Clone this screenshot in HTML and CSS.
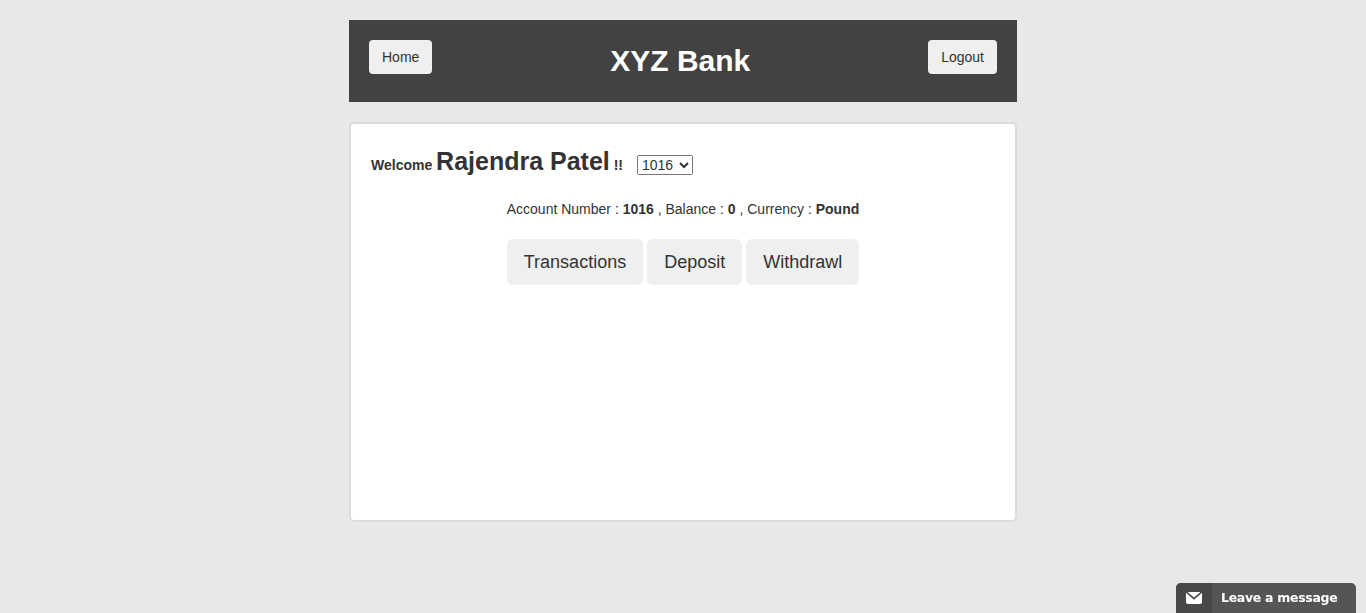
FILE: index.html
```html
<!DOCTYPE html>
<html lang="en">
<head>
<meta charset="utf-8">
<title>XYZ Bank</title>
<link rel="stylesheet" href="styles.css">
</head>
<body>
<div class="page">
  <header class="bar">
    <button class="btn">Home</button>
    <strong class="brand">XYZ Bank</strong>
    <button class="btn">Logout</button>
  </header>
  <main class="panel">
    <div class="welcome"><strong>Welcome <span class="name">Rajendra Patel</span> !!</strong><select class="account"><option>1016</option></select></div>
    <div class="summary">Account Number : <strong>1016</strong> , Balance : <strong>0</strong> , Currency : <strong>Pound</strong></div>
    <div class="tabs">
      <button class="tab">Transactions</button>
      <button class="tab">Deposit</button>
      <button class="tab">Withdrawl</button>
    </div>
  </main>
</div>
<div class="chat">
  <span class="chat-icon"><svg width="16" height="12" viewBox="0 0 16 12"><path fill="#fff" d="M1.500 0h13L8 5.600zM0 .8L8 7.700 16 .8V10q0 2-2 2H2q-2 0-2-2z"/></svg></span>
  <span class="chat-label">Leave a message</span>
</div>
</body>
</html>
```
FILE: styles.css
```css
* { box-sizing: border-box; }
body {
  margin: 0;
  height: 613px;
  overflow: hidden;
  background: #e8e8e8;
  color: #333;
  font: 14px/20px "Liberation Sans", Arial, sans-serif;
}
.page { width: 668px; margin: 0 auto; padding-top: 20px; }
.bar {
  display: flex;
  justify-content: space-between;
  align-items: flex-start;
  height: 82px;
  padding: 20px;
  background: #424242;
}
.btn {
  height: 34px;
  padding: 0 13px;
  border: 0;
  border-radius: 4px;
  background: #efefef;
  color: #333;
  font: inherit;
}
.brand { color: #fff; font-size: 30px; line-height: 42px; }
.panel {
  height: 400px;
  margin-top: 20px;
  padding: 20px;
  border: 2px solid #dcdcdc;
  border-radius: 5px;
  background: #fff;
}
.welcome { height: 36px; line-height: 35px; }
.name { font-size: 25px; }
.account {
  height: 20px;
  width: 56px;
  margin-left: 14px;
  color: #333;
  font: 14px "Liberation Sans", Arial, sans-serif;
}
.summary { margin-top: 19px; text-align: center; }
.tabs { display: flex; justify-content: center; gap: 4px; margin-top: 20px; }
.tab {
  height: 46px;
  padding: 0 17px;
  border: 0;
  border-radius: 6px;
  background: #efefef;
  color: #333;
  font: 18px/24px "Liberation Sans", Arial, sans-serif;
}
.chat {
  position: fixed;
  right: 10px;
  bottom: 0;
  display: flex;
  width: 180px;
  height: 30px;
  overflow: hidden;
  border-radius: 5px 5px 0 0;
  background: #555;
  color: #fff;
}
.chat-icon { display: flex; width: 36px; align-items: center; justify-content: center; background: #484848; }
.chat-label { padding-left: 9px; font: bold 12.5px/30px "DejaVu Sans", sans-serif; letter-spacing: -0.3px; }
```
